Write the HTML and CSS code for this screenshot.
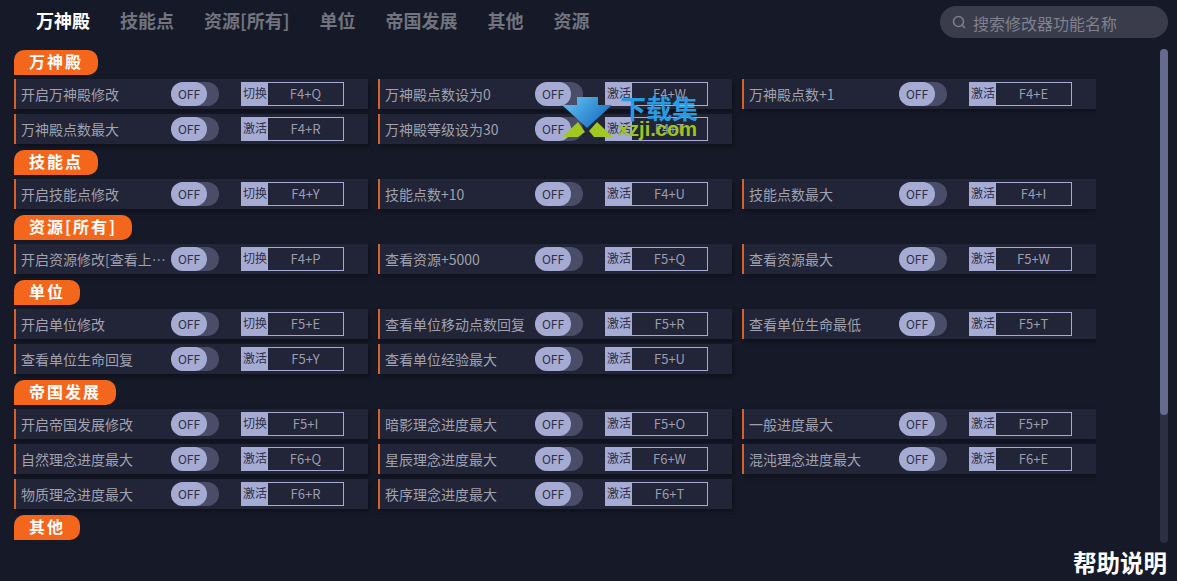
FILE: index.html
```html
<!DOCTYPE html>
<html lang="zh">
<head>
<meta charset="utf-8">
<title>修改器</title>
<link rel="stylesheet" href="styles.css">
</head>
<body>
<div class="app">
  <header class="top">
    <nav class="tabs">
      <span class="tab active">万神殿</span><span class="tab">技能点</span><span class="tab">资源[所有]</span><span class="tab">单位</span><span class="tab">帝国发展</span><span class="tab">其他</span><span class="tab">资源</span>
    </nav>
    <div class="search">
      <svg class="search-icon" width="14" height="14" viewBox="0 0 14 14"><circle cx="6.5" cy="6.5" r="5" fill="none" stroke="#7b7d8b" stroke-width="1.6"/><path d="M10 10l2.5 2.5" stroke="#7b7d8b" stroke-width="1.6" stroke-linecap="round"/></svg>
      <span class="search-text">搜索修改器功能名称</span>
    </div>
  </header>
  <div class="body">
    <main class="list">
      <h2 class="sec">万神殿</h2>
      <div class="grid">
        <div class="row"><span class="name">开启万神殿修改</span><span class="sw"><i>OFF</i></span><span class="key"><b>切换</b><em>F4+Q</em></span></div>
        <div class="row"><span class="name">万神殿点数设为0</span><span class="sw"><i>OFF</i></span><span class="key"><b>激活</b><em>F4+W</em></span></div>
        <div class="row"><span class="name">万神殿点数+1</span><span class="sw"><i>OFF</i></span><span class="key"><b>激活</b><em>F4+E</em></span></div>
        <div class="row"><span class="name">万神殿点数最大</span><span class="sw"><i>OFF</i></span><span class="key"><b>激活</b><em>F4+R</em></span></div>
        <div class="row"><span class="name">万神殿等级设为30</span><span class="sw"><i>OFF</i></span><span class="key"><b>激活</b><em>F4+T</em></span></div>
      </div>
      <h2 class="sec">技能点</h2>
      <div class="grid">
        <div class="row"><span class="name">开启技能点修改</span><span class="sw"><i>OFF</i></span><span class="key"><b>切换</b><em>F4+Y</em></span></div>
        <div class="row"><span class="name">技能点数+10</span><span class="sw"><i>OFF</i></span><span class="key"><b>激活</b><em>F4+U</em></span></div>
        <div class="row"><span class="name">技能点数最大</span><span class="sw"><i>OFF</i></span><span class="key"><b>激活</b><em>F4+I</em></span></div>
      </div>
      <h2 class="sec">资源[所有]</h2>
      <div class="grid">
        <div class="row"><span class="name">开启资源修改[查看上方资源]</span><span class="sw"><i>OFF</i></span><span class="key"><b>切换</b><em>F4+P</em></span></div>
        <div class="row"><span class="name">查看资源+5000</span><span class="sw"><i>OFF</i></span><span class="key"><b>激活</b><em>F5+Q</em></span></div>
        <div class="row"><span class="name">查看资源最大</span><span class="sw"><i>OFF</i></span><span class="key"><b>激活</b><em>F5+W</em></span></div>
      </div>
      <h2 class="sec">单位</h2>
      <div class="grid">
        <div class="row"><span class="name">开启单位修改</span><span class="sw"><i>OFF</i></span><span class="key"><b>切换</b><em>F5+E</em></span></div>
        <div class="row"><span class="name">查看单位移动点数回复</span><span class="sw"><i>OFF</i></span><span class="key"><b>激活</b><em>F5+R</em></span></div>
        <div class="row"><span class="name">查看单位生命最低</span><span class="sw"><i>OFF</i></span><span class="key"><b>激活</b><em>F5+T</em></span></div>
        <div class="row"><span class="name">查看单位生命回复</span><span class="sw"><i>OFF</i></span><span class="key"><b>激活</b><em>F5+Y</em></span></div>
        <div class="row"><span class="name">查看单位经验最大</span><span class="sw"><i>OFF</i></span><span class="key"><b>激活</b><em>F5+U</em></span></div>
      </div>
      <h2 class="sec">帝国发展</h2>
      <div class="grid">
        <div class="row"><span class="name">开启帝国发展修改</span><span class="sw"><i>OFF</i></span><span class="key"><b>切换</b><em>F5+I</em></span></div>
        <div class="row"><span class="name">暗影理念进度最大</span><span class="sw"><i>OFF</i></span><span class="key"><b>激活</b><em>F5+O</em></span></div>
        <div class="row"><span class="name">一般进度最大</span><span class="sw"><i>OFF</i></span><span class="key"><b>激活</b><em>F5+P</em></span></div>
        <div class="row"><span class="name">自然理念进度最大</span><span class="sw"><i>OFF</i></span><span class="key"><b>激活</b><em>F6+Q</em></span></div>
        <div class="row"><span class="name">星辰理念进度最大</span><span class="sw"><i>OFF</i></span><span class="key"><b>激活</b><em>F6+W</em></span></div>
        <div class="row"><span class="name">混沌理念进度最大</span><span class="sw"><i>OFF</i></span><span class="key"><b>激活</b><em>F6+E</em></span></div>
        <div class="row"><span class="name">物质理念进度最大</span><span class="sw"><i>OFF</i></span><span class="key"><b>激活</b><em>F6+R</em></span></div>
        <div class="row"><span class="name">秩序理念进度最大</span><span class="sw"><i>OFF</i></span><span class="key"><b>激活</b><em>F6+T</em></span></div>
      </div>
      <h2 class="sec">其他</h2>
    </main>
    <div class="scroll"><div class="thumb"></div></div>
  </div>
  <footer class="foot">帮助说明</footer>
</div>
<div class="mark">
  <svg class="mark-logo" width="52" height="42" viewBox="0 0 52 42">
    <defs><linearGradient id="mg" x1="0" y1="0" x2="1" y2="0.6"><stop offset="0" stop-color="#6cc8f2"/><stop offset="1" stop-color="#1670c4"/></linearGradient></defs>
    <path d="M15 1H36V9H50L25 32L0 9H15Z" fill="url(#mg)"/>
    <path d="M16 26L0 41H16L23 36Z" fill="#a0c81e"/>
    <path d="M35 26L27 35L32 41H51Z" fill="#a0c81e"/>
  </svg>
  <div class="mark-text"><span class="mark-cn">下载集</span><span class="mark-en">xzji.com</span></div>
</div>
</body>
</html>
```
FILE: styles.css
```css
* { box-sizing: border-box; }
html, body { margin: 0; height: 100%; }
body {
  position: relative;
  background: #161a28;
  font-family: "Noto Sans CJK SC", "Noto Sans", sans-serif;
  overflow: hidden;
}
.app { width: 1177px; height: 581px; display: flex; flex-direction: column; }
.top { height: 49px; flex: none; display: flex; justify-content: space-between; padding: 6px 9px 0 36px; }
.tabs { display: flex; gap: 30px; height: 28px; align-items: center; }
.tab { font-size: 18px; font-weight: 700; color: #71737e; line-height: 28px; white-space: nowrap; }
.tab.active { color: #fff; }
.search {
  width: 228px; height: 32px; border-radius: 16px; background: #3a3c4b;
  display: flex; align-items: center; gap: 7px; padding: 0 12px;
  color: #7f818e; font-size: 16px;
}
.search-icon { flex: none; }
.search-text { padding-top: 1px; }
.body { height: 494px; flex: none; display: flex; justify-content: space-between; padding: 0 9px 0 14px; }
.list { width: 1082px; overflow: hidden; padding-top: 1px; }
.sec {
  display: inline-block; vertical-align: top; margin: 0 0 4px; height: 25px; padding: 0 15px;
  background: #f4661b; color: #fff; font-size: 16px; font-weight: 700; line-height: 23px;
  letter-spacing: 2px; border-radius: 10px 10px 10px 0;
}
.grid { display: grid; grid-template-columns: repeat(3, 354px); column-gap: 10px; row-gap: 5px; margin-bottom: 6px; }
.row {
  height: 30px; display: flex; align-items: center; background: #222437;
  border-left: 2px solid #d8612a; padding-left: 5px;
  box-shadow: 2px 3px 5px rgba(0,0,0,.35);
}
.name { width: 150px; flex: none; padding-right: 2px; font-size: 14px; color: #9fa1af; white-space: nowrap; overflow: hidden; text-overflow: ellipsis; }
.sw { width: 48px; height: 24px; flex: none; border-radius: 12px; background: #4a4d68; display: block; }
.sw i {
  display: block; width: 36px; height: 24px; border-radius: 12px; background: #a6abd4;
  color: #2e3048; font-style: normal; font-size: 12px; line-height: 24px; text-align: center;
}
.key { margin-left: 22px; width: 103px; height: 24px; flex: none; display: flex; border: 1px solid #a6abd4; }
.key b { width: 26px; flex: none; background: #a6abd4; color: #2e3048; font-weight: 400; font-size: 12px; line-height: 20px; text-align: center; white-space: nowrap; }
.key em { flex: 1; color: #9a9cb0; font-style: normal; font-size: 13px; line-height: 21px; text-align: center; }
.scroll { width: 8px; height: 494px; border-radius: 4px; background: #2c2e42; flex: none; }
.thumb { height: 366px; border-radius: 4px; background: #666a8c; }
.foot { flex: none; padding-right: 10px; text-align: right; color: #fff; font-size: 23.5px; font-weight: 700; line-height: 38px; }
.mark { position: absolute; left: 562px; top: 96px; display: flex; pointer-events: none; }
.mark-logo { flex: none; }
.mark-text { display: flex; flex-direction: column; margin-left: 6px; margin-top: -1px; }
.mark-cn { font-size: 26px; font-weight: 700; line-height: 26px; color: #2a9be0; }
.mark-en { font-family: "Liberation Sans", sans-serif; font-size: 20px; font-weight: 700; line-height: 20px; color: #9cc41f; margin-left: -2px; margin-top: -2px; }
```
